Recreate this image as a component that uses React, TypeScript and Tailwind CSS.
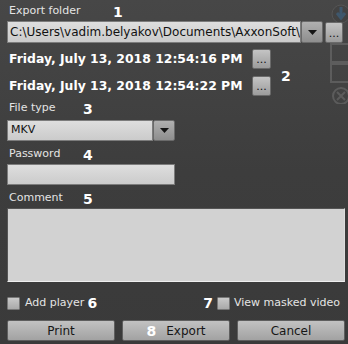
import React from 'react';

const font = { fontFamily: '"DejaVu Sans", Verdana, sans-serif' };

const Num: React.FC<{ n: string; className?: string }> = ({ n, className = '' }) => (
  <span className={`text-[14px] font-bold text-white leading-none ${className}`}>{n}</span>
);

const Dots: React.FC<{ className?: string }> = ({ className = '' }) => (
  <div
    className={`flex items-end justify-center pb-[3px] rounded-[2px] border border-[#6a6a6a] bg-gradient-to-b from-[#c4c4c4] to-[#9c9c9c] text-[11px] leading-none text-[#111] ${className}`}
  >
    ...
  </div>
);

const Arrow: React.FC<{ className?: string }> = ({ className = '' }) => (
  <div
    className={`flex items-center justify-center rounded-[2px] border border-[#6a6a6a] bg-gradient-to-b from-[#b0b0b0] to-[#8e8e8e] ${className}`}
  >
    <svg width="9" height="5" viewBox="0 0 9 5">
      <path d="M0 0 H9 L4.5 5 Z" fill="#151515" />
    </svg>
  </div>
);

const Field: React.FC<{ className?: string; children?: React.ReactNode }> = ({ className = '', children }) => (
  <div
    className={`border border-[#7c7c7c] bg-gradient-to-b from-[#dedede] to-[#cbcbcb] text-[#111] overflow-hidden whitespace-nowrap ${className}`}
  >
    {children}
  </div>
);

const Check: React.FC = () => (
  <div className="w-[13px] h-[13px] border border-[#777] bg-gradient-to-b from-[#c9c9c9] to-[#a9a9a9] rounded-[1px]" />
);

const Btn: React.FC<{ children: React.ReactNode }> = ({ children }) => (
  <div className="flex-1 h-[21px] flex items-center justify-center border border-[#5e5e5e] rounded-[2px] bg-gradient-to-b from-[#c2c2c2] to-[#a2a2a2] text-[12px] text-[#161616]">
    {children}
  </div>
);

export default function App() {
  return (
    <div
      style={font}
      className="relative w-[348px] h-[344px] overflow-hidden bg-gradient-to-b from-[#474747] via-[#3d3d3d] to-[#3a3a3a] text-[#e4e4e4] text-[11px]"
    >
      {/* faint toolbar icons of the video view behind the panel */}
      <svg className="absolute left-[329px] top-[4px] opacity-30" width="24" height="100" viewBox="0 0 24 100">
        <circle cx="12" cy="10" r="9" fill="#3a3a3a" stroke="#777" />
        <path d="M12 3 V13 M8 9 L12 14 L16 9" stroke="#2f7fc4" strokeWidth="3" fill="none" />
        <rect x="2" y="40" width="18" height="18" fill="none" stroke="#999" strokeWidth="2" />
        <rect x="2" y="60" width="18" height="18" fill="none" stroke="#999" strokeWidth="2" />
        <circle cx="12" cy="92" r="8" fill="none" stroke="#999" strokeWidth="2" />
        <path d="M8 88 L16 96 M16 88 L8 96" stroke="#999" strokeWidth="2" />
      </svg>

      <div className="relative flex flex-col pl-[7px] pr-[3px]">
        <div className="flex items-center h-[17px] mt-[3px] pl-[2px]">
          <span className="w-[104px]">Export folder</span>
          <Num n="1" />
        </div>

        <div className="flex items-center mt-[1px] h-[22px]">
          <Field className="flex-1 h-[22px] flex items-center pl-[2px] text-[12px]">
            C:\Users\vadim.belyakov\Documents\AxxonSoft\Export
          </Field>
          <Arrow className="w-[22px] h-[22px]" />
          <Dots className="w-[18px] h-[21px] ml-[2px] mr-[2px]" />
        </div>

        <div className="flex items-center mt-[6px]">
          <div className="flex flex-col gap-[7px]">
            {['Friday, July 13, 2018 12:54:16 PM', 'Friday, July 13, 2018 12:54:22 PM'].map((d) => (
              <div key={d} className="flex items-center h-[20px]">
                <span className="w-[245px] pl-[2px] text-[12.4px] font-bold text-white">{d}</span>
                <Dots className="w-[19px] h-[20px]" />
              </div>
            ))}
          </div>
          <Num n="2" className="ml-[10px] mt-[6px]" />
        </div>

        <div className="flex items-center h-[17px] mt-[4px] pl-[2px]">
          <span className="w-[74px]">File type</span>
          <Num n="3" />
        </div>

        <div className="flex items-center mt-[3px] h-[21px]">
          <Field className="w-[146px] h-[21px] flex items-center pl-[3px] text-[11px]">MKV</Field>
          <Arrow className="w-[22px] h-[21px]" />
        </div>

        <div className="flex items-center h-[17px] mt-[5px] pl-[2px]">
          <span className="w-[74px]">Password</span>
          <Num n="4" />
        </div>
        <Field className="w-[168px] h-[21px] mt-[1px]" />

        <div className="flex items-center h-[17px] mt-[5px] pl-[2px]">
          <span className="w-[74px]">Comment</span>
          <Num n="5" />
        </div>
        <Field className="w-[338px] h-[74px] mt-[1px] border-[#555] border-b-[#eee] border-r-[#ddd] bg-none bg-[#d2d2d2]" />

        <div className="flex items-center h-[14px] mt-[14px] pr-[5px]">
          <Check />
          <span className="ml-[5px]">Add player</span>
          <Num n="6" className="ml-[3px]" />
          <div className="flex-1" />
          <Num n="7" className="mr-[4px]" />
          <Check />
          <span className="ml-[4px]">View masked video</span>
        </div>

        <div className="flex gap-[7px] mt-[10px] w-[338px]">
          <Btn>Print</Btn>
          <Btn>
            <Num n="8" className="mr-[10px]" />
            Export
          </Btn>
          <Btn>Cancel</Btn>
        </div>
      </div>
    </div>
  );
}
